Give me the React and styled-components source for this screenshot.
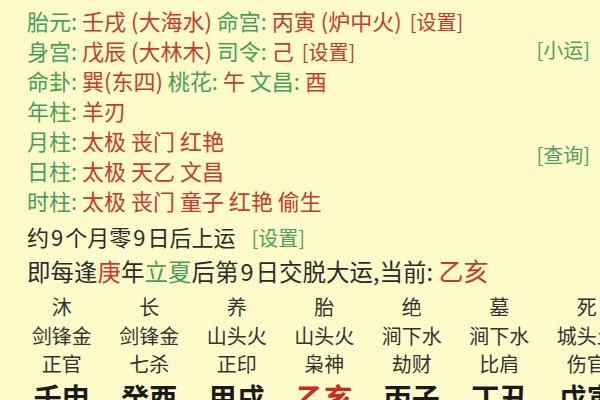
import React from 'react';
import styled, { createGlobalStyle } from 'styled-components';

const GlobalStyle = createGlobalStyle`
  html, body {
    margin: 0;
    padding: 0;
    background: #fdfbc9;
  }
  body {
    font-family: "Noto Sans CJK SC", "Noto Sans", sans-serif;
    overflow: hidden;
  }
`;

const Page = styled.div`
  width: 600px;
  height: 400px;
  overflow: hidden;
  background: #fdfbc9;
  color: #2b2b2b;
`;

const InfoBlock = styled.div`
  display: flex;
  justify-content: space-between;
  padding: 5px 10px 0 27px;
`;

const Lines = styled.div`
  display: flex;
  flex-direction: column;
`;

const Line = styled.div`
  height: ${(p) => p.h || 30}px;
  line-height: ${(p) => p.h || 30}px;
  font-size: ${(p) => p.fs || 22}px;
  white-space: nowrap;
  margin-top: ${(p) => p.mt || 0}px;
`;

const Label = styled.span`
  color: #45a05d;
`;

const Value = styled.span`
  color: #c9392e;
`;

const Digit = styled.span`
  padding: 0 2px;
`;

const Link = styled.span`
  color: ${(p) => (p.green ? '#4f9f62' : '#c9392e')};
  font-size: 20px;
  margin-left: ${(p) => p.ml || 0}px;
`;

const SideLinks = styled.div`
  display: flex;
  flex-direction: column;
  padding-top: 30px;
`;

const SideLink = styled.div`
  height: 30px;
  line-height: 30px;
  font-size: 20px;
  color: #4f9f62;
  margin-top: ${(p) => p.mt || 0}px;
`;

const Now = styled.span`
  color: #c9392e;
  font-size: 25px;
`;

const Grid = styled.div`
  display: grid;
  grid-template-columns: repeat(7, 87.5px);
  margin-left: 18px;
  margin-top: 5px;
`;

const Cell = styled.div`
  text-align: center;
  white-space: nowrap;
  height: ${(p) => p.h}px;
  line-height: ${(p) => p.h}px;
  font-size: ${(p) => (p.big ? 28 : 20)}px;
  font-weight: ${(p) => (p.big ? 700 : 400)};
  color: ${(p) => (p.red ? '#d0281e' : p.big ? '#1a1a1a' : '#333')};
`;

const stages = ['沐', '长', '养', '胎', '绝', '墓', '死'];
const nayin = ['剑锋金', '剑锋金', '山头火', '山头火', '涧下水', '涧下水', '城头土'];
const gods = ['正官', '七杀', '正印', '枭神', '劫财', '比肩', '伤官'];
const pillars = ['壬申', '癸酉', '甲戌', '乙亥', '丙子', '丁丑', '戊寅'];

const rows = [
  { items: stages, h: 30 },
  { items: nayin, h: 28 },
  { items: gods, h: 28 },
  { items: pillars, h: 38, big: true },
];

export default function App() {
  return (
    <Page>
      <GlobalStyle />
      <InfoBlock>
        <Lines>
          <Line>
            <Label>胎元: </Label><Value>壬戌 (大海水) </Value>
            <Label>命宫: </Label><Value>丙寅 (炉中火)</Value>
            <Link ml={8}>[设置]</Link>
          </Line>
          <Line>
            <Label>身宫: </Label><Value>戊辰 (大林木) </Value>
            <Label>司令: </Label><Value>己</Value>
            <Link ml={8}>[设置]</Link>
          </Line>
          <Line>
            <Label>命卦: </Label><Value>巽(东四) </Value>
            <Label>桃花: </Label><Value>午 </Value>
            <Label>文昌: </Label><Value>酉</Value>
          </Line>
          <Line>
            <Label>年柱: </Label><Value>羊刃</Value>
          </Line>
          <Line>
            <Label>月柱: </Label><Value>太极 丧门 红艳</Value>
          </Line>
          <Line>
            <Label>日柱: </Label><Value>太极 天乙 文昌</Value>
          </Line>
          <Line>
            <Label>时柱: </Label><Value>太极 丧门 童子 红艳 偷生</Value>
          </Line>
          <Line mt={6}>
            约<Digit>9</Digit>个月零<Digit>9</Digit>日后上运<Link green ml={16}>[设置]</Link>
          </Line>
          <Line mt={3} h={33} fs={23.5}>
            即每逢<Value>庚</Value>年<Label>立夏</Label>后第<Digit>9</Digit>日交脱大运,当前: <Now>乙亥</Now>
          </Line>
        </Lines>
        <SideLinks>
          <SideLink>[小运]</SideLink>
          <SideLink mt={75}>[查询]</SideLink>
        </SideLinks>
      </InfoBlock>
      <Grid>
        {rows.map((row, r) =>
          row.items.map((t, i) => (
            <Cell key={r + '-' + i} h={row.h} big={row.big} red={row.big && t === '乙亥'}>
              {t}
            </Cell>
          ))
        )}
      </Grid>
    </Page>
  );
}
